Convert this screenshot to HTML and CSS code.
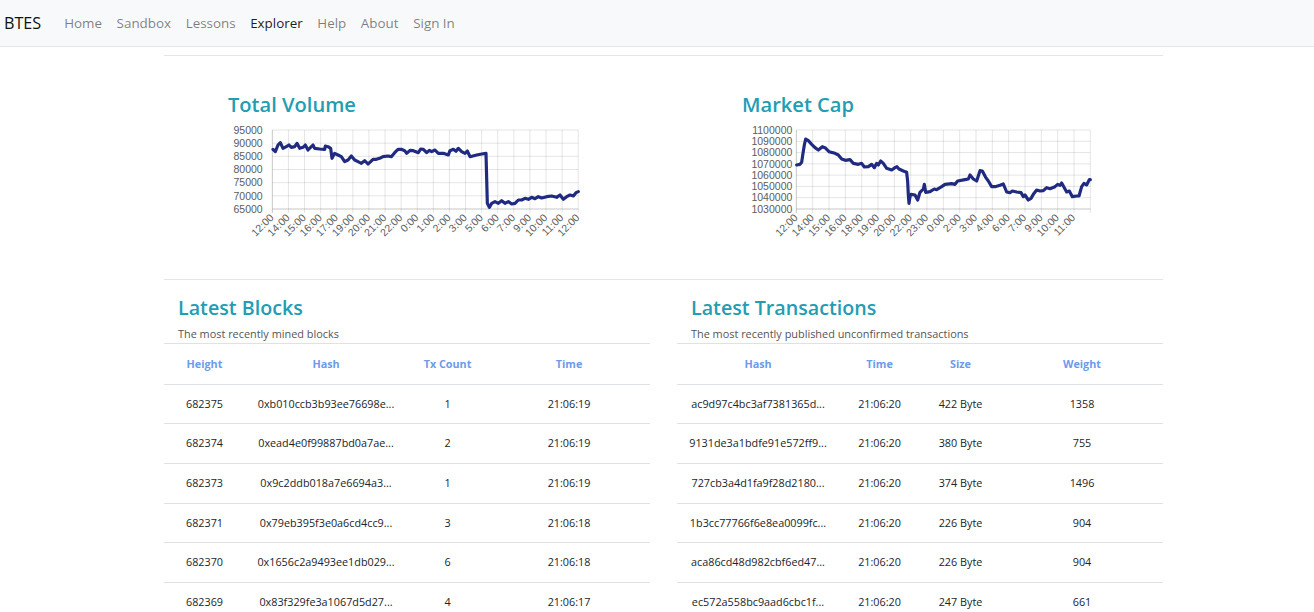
FILE: index.html
```html
<!DOCTYPE html>
<html lang="en">
<head>
<meta charset="utf-8">
<title>BTES Explorer</title>
<link rel="stylesheet" href="styles.css">
</head>
<body>
<nav class="navbar">
  <a class="brand" href="#">BTES</a>
  <ul class="nav-links">
    <li><a href="#">Home</a></li>
    <li><a href="#">Sandbox</a></li>
    <li><a href="#">Lessons</a></li>
    <li><a class="active" href="#">Explorer</a></li>
    <li><a href="#">Help</a></li>
    <li><a href="#">About</a></li>
    <li><a href="#">Sign In</a></li>
  </ul>
</nav>
<main class="page">
  <hr class="rule">
  <section class="charts">
    <div class="chart chart-volume">
      <h3 class="chart-title">Total Volume</h3>
      <svg class="chart-svg" width="380" height="135" viewBox="0 105 1140 405">
        <g class="grid">
          <line x1="157" y1="135" x2="1075" y2="135"/>
          <line x1="157" y1="174.5" x2="1075" y2="174.5"/>
          <line x1="157" y1="214" x2="1075" y2="214"/>
          <line x1="157" y1="253.5" x2="1075" y2="253.5"/>
          <line x1="157" y1="293" x2="1075" y2="293"/>
          <line x1="157" y1="332.5" x2="1075" y2="332.5"/>
          <line x1="205.3" y1="135" x2="205.3" y2="384"/>
          <line x1="253.6" y1="135" x2="253.6" y2="384"/>
          <line x1="301.9" y1="135" x2="301.9" y2="384"/>
          <line x1="350.2" y1="135" x2="350.2" y2="384"/>
          <line x1="398.5" y1="135" x2="398.5" y2="384"/>
          <line x1="446.8" y1="135" x2="446.8" y2="384"/>
          <line x1="495.1" y1="135" x2="495.1" y2="384"/>
          <line x1="543.4" y1="135" x2="543.4" y2="384"/>
          <line x1="591.7" y1="135" x2="591.7" y2="384"/>
          <line x1="640" y1="135" x2="640" y2="384"/>
          <line x1="688.3" y1="135" x2="688.3" y2="384"/>
          <line x1="736.6" y1="135" x2="736.6" y2="384"/>
          <line x1="784.9" y1="135" x2="784.9" y2="384"/>
          <line x1="833.2" y1="135" x2="833.2" y2="384"/>
          <line x1="881.5" y1="135" x2="881.5" y2="384"/>
          <line x1="929.8" y1="135" x2="929.8" y2="384"/>
          <line x1="978.1" y1="135" x2="978.1" y2="384"/>
          <line x1="1026.4" y1="135" x2="1026.4" y2="384"/>
          <line x1="1074.7" y1="135" x2="1074.7" y2="384"/>
        </g>
        <g class="axis">
          <line x1="157" y1="135" x2="157" y2="384"/>
          <line x1="157" y1="372" x2="1075" y2="372"/>
        </g>
        <g class="ylabels">
          <text x="128" y="146">95000</text>
          <text x="128" y="185.5">90000</text>
          <text x="128" y="225">85000</text>
          <text x="128" y="264.5">80000</text>
          <text x="128" y="304">75000</text>
          <text x="128" y="343.5">70000</text>
          <text x="128" y="383">65000</text>
        </g>
        <g class="xlabels">
          <text x="163" y="400" transform="rotate(-45 163 400)">12:00</text>
          <text x="211.3" y="400" transform="rotate(-45 211.3 400)">14:00</text>
          <text x="259.6" y="400" transform="rotate(-45 259.6 400)">15:00</text>
          <text x="307.9" y="400" transform="rotate(-45 307.9 400)">16:00</text>
          <text x="356.2" y="400" transform="rotate(-45 356.2 400)">17:00</text>
          <text x="404.5" y="400" transform="rotate(-45 404.5 400)">19:00</text>
          <text x="452.8" y="400" transform="rotate(-45 452.8 400)">20:00</text>
          <text x="501.1" y="400" transform="rotate(-45 501.1 400)">21:00</text>
          <text x="549.4" y="400" transform="rotate(-45 549.4 400)">22:00</text>
          <text x="597.7" y="400" transform="rotate(-45 597.7 400)">0:00</text>
          <text x="646" y="400" transform="rotate(-45 646 400)">1:00</text>
          <text x="694.3" y="400" transform="rotate(-45 694.3 400)">2:00</text>
          <text x="742.6" y="400" transform="rotate(-45 742.6 400)">3:00</text>
          <text x="790.9" y="400" transform="rotate(-45 790.9 400)">5:00</text>
          <text x="839.2" y="400" transform="rotate(-45 839.2 400)">6:00</text>
          <text x="887.5" y="400" transform="rotate(-45 887.5 400)">7:00</text>
          <text x="935.8" y="400" transform="rotate(-45 935.8 400)">9:00</text>
          <text x="984.1" y="400" transform="rotate(-45 984.1 400)">10:00</text>
          <text x="1032.4" y="400" transform="rotate(-45 1032.4 400)">11:00</text>
          <text x="1080.7" y="400" transform="rotate(-45 1080.7 400)">12:00</text>
        </g>
        <polyline class="series" points="159,193 166,200 174,180 181,173 189,190 199,185 207,180 214,187 224,185 231,175 239,190 249,187 256,180 264,195 274,185 279,180 284,190 299,192 314,193 316,183 324,185 332,190 336,220 344,205 354,210 364,215 374,230 384,225 394,213 404,225 414,230 424,235 434,227 444,237 452,230 459,223 469,223 479,220 489,215 504,213 514,215 524,203 534,193 544,193 554,197 560,205 570,196 580,197 595,203 602,192 610,193 620,203 628,196 635,200 645,195 655,205 670,205 685,210 690,197 700,193 708,199 715,190 725,200 735,205 742,198 750,215 770,210 785,207 798,205 802,355 808,367 815,355 825,350 835,355 845,347 855,355 865,350 875,357 885,355 895,345 905,345 915,340 925,343 935,337 945,341 955,335 965,339 980,335 995,333 1010,337 1020,330 1030,343 1040,335 1050,330 1060,333 1068,323 1075,320"/>
      </svg>
    </div>
    <div class="chart chart-cap">
      <h3 class="chart-title">Market Cap</h3>
      <svg class="chart-svg" width="380" height="135" viewBox="0 105 1140 405">
        <g class="grid">
          <line x1="184" y1="135" x2="1066" y2="135"/>
          <line x1="184" y1="168.9" x2="1066" y2="168.9"/>
          <line x1="184" y1="202.7" x2="1066" y2="202.7"/>
          <line x1="184" y1="236.6" x2="1066" y2="236.6"/>
          <line x1="184" y1="270.4" x2="1066" y2="270.4"/>
          <line x1="184" y1="304.3" x2="1066" y2="304.3"/>
          <line x1="184" y1="338.1" x2="1066" y2="338.1"/>
          <line x1="233" y1="135" x2="233" y2="384"/>
          <line x1="282" y1="135" x2="282" y2="384"/>
          <line x1="331" y1="135" x2="331" y2="384"/>
          <line x1="380" y1="135" x2="380" y2="384"/>
          <line x1="429" y1="135" x2="429" y2="384"/>
          <line x1="478" y1="135" x2="478" y2="384"/>
          <line x1="527" y1="135" x2="527" y2="384"/>
          <line x1="576" y1="135" x2="576" y2="384"/>
          <line x1="625" y1="135" x2="625" y2="384"/>
          <line x1="674" y1="135" x2="674" y2="384"/>
          <line x1="723" y1="135" x2="723" y2="384"/>
          <line x1="772" y1="135" x2="772" y2="384"/>
          <line x1="821" y1="135" x2="821" y2="384"/>
          <line x1="870" y1="135" x2="870" y2="384"/>
          <line x1="919" y1="135" x2="919" y2="384"/>
          <line x1="968" y1="135" x2="968" y2="384"/>
          <line x1="1017" y1="135" x2="1017" y2="384"/>
          <line x1="1066" y1="135" x2="1066" y2="384"/>
        </g>
        <g class="axis">
          <line x1="184" y1="135" x2="184" y2="384"/>
          <line x1="184" y1="372" x2="1066" y2="372"/>
        </g>
        <g class="ylabels">
          <text x="172" y="146">1100000</text>
          <text x="172" y="179.9">1090000</text>
          <text x="172" y="213.7">1080000</text>
          <text x="172" y="247.6">1070000</text>
          <text x="172" y="281.4">1060000</text>
          <text x="172" y="315.3">1050000</text>
          <text x="172" y="349.1">1040000</text>
          <text x="172" y="383">1030000</text>
        </g>
        <g class="xlabels">
          <text x="190" y="400" transform="rotate(-45 190 400)">12:00</text>
          <text x="239" y="400" transform="rotate(-45 239 400)">14:00</text>
          <text x="288" y="400" transform="rotate(-45 288 400)">15:00</text>
          <text x="337" y="400" transform="rotate(-45 337 400)">16:00</text>
          <text x="386" y="400" transform="rotate(-45 386 400)">18:00</text>
          <text x="435" y="400" transform="rotate(-45 435 400)">19:00</text>
          <text x="484" y="400" transform="rotate(-45 484 400)">20:00</text>
          <text x="533" y="400" transform="rotate(-45 533 400)">22:00</text>
          <text x="582" y="400" transform="rotate(-45 582 400)">23:00</text>
          <text x="631" y="400" transform="rotate(-45 631 400)">0:00</text>
          <text x="680" y="400" transform="rotate(-45 680 400)">2:00</text>
          <text x="729" y="400" transform="rotate(-45 729 400)">3:00</text>
          <text x="778" y="400" transform="rotate(-45 778 400)">4:00</text>
          <text x="827" y="400" transform="rotate(-45 827 400)">6:00</text>
          <text x="876" y="400" transform="rotate(-45 876 400)">7:00</text>
          <text x="925" y="400" transform="rotate(-45 925 400)">9:00</text>
          <text x="974" y="400" transform="rotate(-45 974 400)">10:00</text>
          <text x="1023" y="400" transform="rotate(-45 1023 400)">11:00</text>
        </g>
        <polyline class="series" points="185,240 195,238 200,232 204,205 208,180 212,162 220,167 230,178 240,188 250,195 262,185 270,188 282,200 300,205 310,210 320,222 331,226 345,224 355,235 370,238 380,235 388,246 400,245 410,238 418,248 425,235 430,240 437,228 445,235 455,250 470,255 480,248 486,245 492,252 505,258 515,262 518,290 520,330 522,355 525,335 528,328 540,330 548,345 555,322 565,312 568,298 572,322 585,320 598,312 605,314 620,305 630,298 650,296 660,298 668,288 690,284 700,282 705,270 715,282 725,288 735,257 742,258 752,277 760,288 770,305 780,305 795,301 805,297 815,321 825,323 832,318 845,321 858,323 865,335 870,330 880,345 888,340 895,328 905,315 915,318 925,317 935,308 945,311 960,305 968,298 975,301 980,294 990,312 995,321 1003,318 1012,335 1025,333 1032,333 1040,305 1047,295 1055,300 1063,284 1066,284"/>
      </svg>
    </div>
  </section>
  <hr class="rule rule-flat">
  <section class="lists">
    <div class="panel">
      <h2 class="panel-title">Latest Blocks</h2>
      <p class="panel-sub">The most recently mined blocks</p>
      <table class="data-table">
        <colgroup><col class="c-narrow"><col class="c-wide"><col class="c-narrow"><col class="c-wide"></colgroup>
        <thead><tr><th>Height</th><th>Hash</th><th>Tx Count</th><th>Time</th></tr></thead>
        <tbody>
          <tr><td>682375</td><td>0xb010ccb3b93ee76698e...</td><td>1</td><td>21:06:19</td></tr>
          <tr><td>682374</td><td>0xead4e0f99887bd0a7ae...</td><td>2</td><td>21:06:19</td></tr>
          <tr><td>682373</td><td>0x9c2ddb018a7e6694a3...</td><td>1</td><td>21:06:19</td></tr>
          <tr><td>682371</td><td>0x79eb395f3e0a6cd4cc9...</td><td>3</td><td>21:06:18</td></tr>
          <tr><td>682370</td><td>0x1656c2a9493ee1db029...</td><td>6</td><td>21:06:18</td></tr>
          <tr><td>682369</td><td>0x83f329fe3a1067d5d27...</td><td>4</td><td>21:06:17</td></tr>
        </tbody>
      </table>
    </div>
    <div class="panel">
      <h2 class="panel-title">Latest Transactions</h2>
      <p class="panel-sub">The most recently published unconfirmed transactions</p>
      <table class="data-table">
        <colgroup><col class="c-wide"><col class="c-narrow"><col class="c-narrow"><col class="c-wide"></colgroup>
        <thead><tr><th>Hash</th><th>Time</th><th>Size</th><th>Weight</th></tr></thead>
        <tbody>
          <tr><td>ac9d97c4bc3af7381365d...</td><td>21:06:20</td><td>422 Byte</td><td>1358</td></tr>
          <tr><td>9131de3a1bdfe91e572ff9...</td><td>21:06:20</td><td>380 Byte</td><td>755</td></tr>
          <tr><td>727cb3a4d1fa9f28d2180...</td><td>21:06:20</td><td>374 Byte</td><td>1496</td></tr>
          <tr><td>1b3cc77766f6e8ea0099fc...</td><td>21:06:20</td><td>226 Byte</td><td>904</td></tr>
          <tr><td>aca86cd48d982cbf6ed47...</td><td>21:06:20</td><td>226 Byte</td><td>904</td></tr>
          <tr><td>ec572a558bc9aad6cbc1f...</td><td>21:06:20</td><td>247 Byte</td><td>661</td></tr>
        </tbody>
      </table>
    </div>
  </section>
</main>
</body>
</html>
```

FILE: styles.css
```css
html, body {
  margin: 0;
  padding: 0;
  overflow: hidden;
}

body {
  font-family: "Open Sans", "Noto Sans", sans-serif;
  color: #212529;
  background: #fff;
}

.navbar {
  display: flex;
  align-items: center;
  height: 46px;
  padding-left: 4px;
  background: #f8f9fa;
  border-bottom: 1px solid #e3e4e5;
}

.brand {
  font-size: 16.2px;
  color: #111;
  text-decoration: none;
  margin-right: 15.6px;
}

.nav-links {
  display: flex;
  list-style: none;
  margin: 0;
  padding: 0;
}

.nav-links a {
  display: block;
  padding: 0 7.3px;
  font-size: 13.4px;
  color: rgba(0, 0, 0, 0.5);
  text-decoration: none;
}

.nav-links a.active {
  color: rgba(0, 0, 0, 0.9);
}

.page {
  width: 999px;
  margin-left: 164px;
}

.rule {
  height: 0;
  margin: 8px 0 0;
  border: 0;
  border-top: 1px solid rgba(0, 0, 0, 0.1);
}

.rule-flat {
  margin-top: 0;
}

.charts {
  display: flex;
  height: 223px;
  padding-top: 37px;
  box-sizing: border-box;
}

.chart-volume {
  width: 500px;
  padding-left: 56px;
  box-sizing: border-box;
}

.chart-cap {
  padding-left: 71px;
}

.chart-title {
  margin: 0 0 2.4px 8px;
  font-size: 20.1px;
  font-weight: 600;
  line-height: 24.6px;
  color: #229db2;
}

.chart-cap .chart-title {
  margin-left: 7px;
}

.chart-svg {
  display: block;
}

.grid line {
  stroke: rgba(0, 0, 0, 0.1);
  stroke-width: 3;
}

.axis line {
  stroke: rgba(0, 0, 0, 0.22);
  stroke-width: 3;
}

.ylabels text,
.xlabels text {
  font-family: "Liberation Sans", Arial, sans-serif;
  font-size: 31.5px;
  fill: #5c5c5c;
  text-anchor: end;
}

.series {
  fill: none;
  stroke: #1f2a80;
  stroke-width: 9.5;
  stroke-linejoin: round;
  stroke-linecap: round;
}

.lists {
  display: flex;
  gap: 27px;
}

.panel {
  width: 486px;
}

.panel-title {
  margin: 15.5px 0 4.7px;
  padding-left: 14px;
  font-size: 19.7px;
  font-weight: 600;
  line-height: 24.6px;
  color: #229db2;
}

.panel-sub {
  margin: 0;
  padding-left: 14px;
  font-size: 10.9px;
  line-height: 18px;
  color: #555;
}

.data-table {
  width: 100%;
  border-collapse: collapse;
  table-layout: fixed;
  font-size: 10.8px;
}

.c-narrow {
  width: 81px;
}

.c-wide {
  width: 162px;
}

.data-table th,
.data-table td {
  padding: 12px 0;
  text-align: center;
  border-top: 1px solid #dee2e6;
  white-space: nowrap;
}

.data-table th {
  line-height: 16px;
  font-weight: 700;
  color: #6d9bea;
  border-bottom: 1px solid #dee2e6;
}

.data-table td {
  line-height: 14.6px;
}
```
